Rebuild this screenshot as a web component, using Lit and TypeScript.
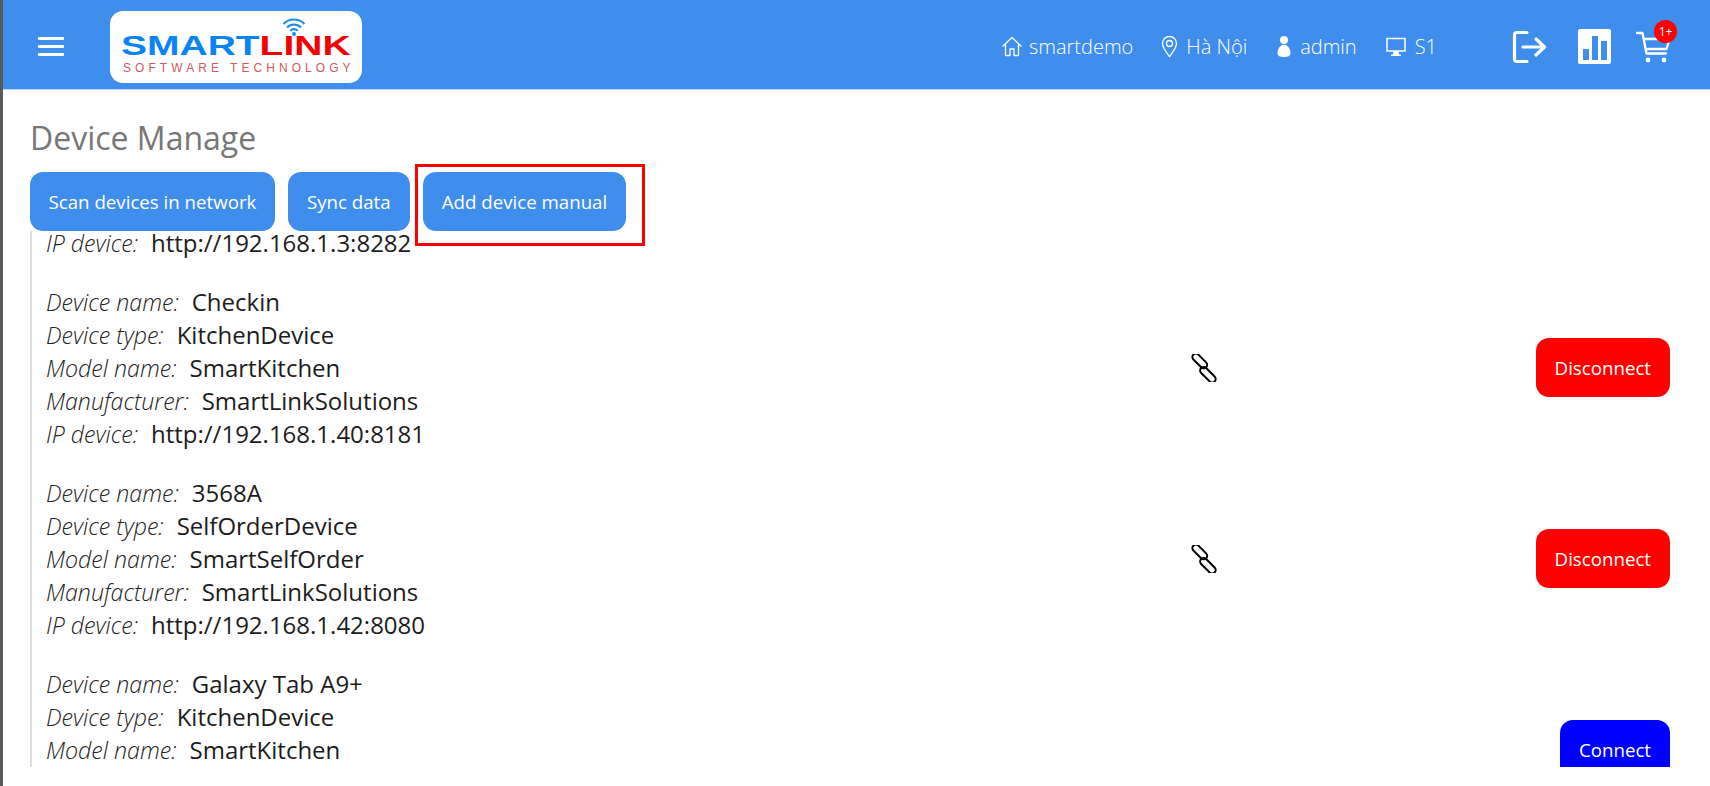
import { LitElement, html, css, svg } from "lit";
import { customElement } from "lit/decorators.js";

const ic = {
  home: svg`<path d="M2 11 L11 2.5 L20 11 M4.5 9.5 V20.5 H9 V14 H13 V20.5 H17.5 V9.5" fill="none" stroke="#fff" stroke-width="1.3" stroke-linejoin="round" stroke-linecap="round"/>`,
  pin: svg`<path d="M8.5 1.5 C4.5 1.5 1.5 4.5 1.5 8.5 C1.5 13 6 18 8.5 21.5 C11 18 15.5 13 15.5 8.5 C15.5 4.5 12.5 1.5 8.5 1.5 Z" fill="none" stroke="#fff" stroke-width="1.3"/><circle cx="8.5" cy="8.5" r="3" fill="none" stroke="#fff" stroke-width="1.3"/>`,
  person: svg`<circle cx="8" cy="5" r="4" fill="#fff"/><path d="M8 9.5 C4.5 9.5 1.5 14 1.5 18 C1.5 21 4 22 8 22 C12 22 14.5 21 14.5 18 C14.5 14 11.5 9.5 8 9.5 Z" fill="#fff"/>`,
  monitor: svg`<path d="M2 2.5 H20 V15 H2 Z" fill="none" stroke="#fff" stroke-width="1.5"/><path d="M8.5 15 H13.5 L14 18.5 H16 V20 H6 V18.5 H8 Z" fill="#fff"/>`,
  logout: svg`<path d="M15 2.5 H5 Q2.5 2.5 2.5 5 V29 Q2.5 31.5 5 31.5 H15" fill="none" stroke="#fff" stroke-width="3.2" stroke-linecap="round"/><path d="M11 17 H32 M24 9 L32.5 17 L24 25" fill="none" stroke="#fff" stroke-width="3.2" stroke-linecap="round" stroke-linejoin="round"/>`,
  chart: svg`<rect width="33" height="35" rx="2" fill="#fff"/><rect x="5" y="20" width="6" height="11" fill="#3f8eed"/><rect x="14" y="7" width="6" height="24" fill="#3f8eed"/><rect x="23" y="12" width="6" height="19" fill="#3f8eed"/>`,
  cart: svg`<path d="M1 2 H6.5 L10.5 22.5 H30" fill="none" stroke="#fff" stroke-width="2.3" stroke-linecap="round" stroke-linejoin="round"/><path d="M7.5 8 H33.5 L30.5 18 H9.5" fill="none" stroke="#fff" stroke-width="2.3" stroke-linejoin="round"/><circle cx="12" cy="29" r="2.4" fill="#fff"/><circle cx="28" cy="29" r="2.4" fill="#fff"/>`,
  wifi: svg`<path d="M1.5 7 C7 1 17 1 22.5 7 M5 10.5 C9 6.5 15 6.5 19 10.5 M8.2 13.8 C10.5 11.8 13.5 11.8 15.8 13.8" fill="none" stroke="#1e88e5" stroke-width="2"/><circle cx="12" cy="17" r="2" fill="#1e88e5"/>`,
  link: svg`<g fill="none" stroke="#000" stroke-width="2" transform="rotate(45 14 14)"><rect x="-3" y="8.5" width="18" height="7" rx="3.5"/><rect x="12" y="12.5" width="19" height="7" rx="3.5"/></g>`,
};

type Dev = { lines: [string, string][]; on: boolean };
const devices: Dev[] = [
  {
    on: true,
    lines: [
      ["Device name:", "Checkin"],
      ["Device type:", "KitchenDevice"],
      ["Model name:", "SmartKitchen"],
      ["Manufacturer:", "SmartLinkSolutions"],
      ["IP device:", "http://192.168.1.40:8181"],
    ],
  },
  {
    on: true,
    lines: [
      ["Device name:", "3568A"],
      ["Device type:", "SelfOrderDevice"],
      ["Model name:", "SmartSelfOrder"],
      ["Manufacturer:", "SmartLinkSolutions"],
      ["IP device:", "http://192.168.1.42:8080"],
    ],
  },
  {
    on: false,
    lines: [
      ["Device name:", "Galaxy Tab A9+"],
      ["Device type:", "KitchenDevice"],
      ["Model name:", "SmartKitchen"],
    ],
  },
];

@customElement("app-root")
export class AppRoot extends LitElement {
  static styles = css`
    :host {
      display: block;
      height: 786px;
      overflow: hidden;
      background: #fff;
      border-left: 3px solid #5a5a5a;
      box-sizing: border-box;
      font-family: "Open Sans", "Noto Sans", sans-serif;
    }
    header {
      height: 89px;
      padding-top: 4px;
      box-sizing: border-box;
      background: #3f8eed;
      display: flex;
      align-items: center;
      color: #fff;
    }
    .rule {
      height: 1px;
      background: #bcd9fa;
    }
    .burger {
      margin-left: 35px;
      width: 26px;
      display: flex;
      flex-direction: column;
      gap: 5px;
    }
    .burger i {
      display: block;
      height: 3px;
      background: #fff;
      border-radius: 1px;
    }
    .logo {
      margin-left: 46px;
      width: 252px;
      height: 72px;
      box-sizing: border-box;
      background: #fff;
      border-radius: 13px;
      padding: 7px 0 0 11px;
      display: flex;
      flex-direction: column;
      position: relative;
    }
    .wifi {
      position: absolute;
      left: 172px;
      top: 6px;
      width: 24px;
      height: 20px;
    }
    .brand {
      margin-top: 15px;
      font: 700 27px/26px "Liberation Sans", sans-serif;
      color: #0b84f3;
      transform: scaleX(1.444);
      transform-origin: left center;
      white-space: nowrap;
    }
    .brand b {
      color: #f40000;
    }
    .tag {
      margin-top: 2px;
      margin-left: 2px;
      font: 400 12px/14px "Liberation Sans", sans-serif;
      letter-spacing: 4.05px;
      color: #cf5a60;
      white-space: nowrap;
    }
    .info {
      margin-left: auto;
      display: flex;
      align-items: center;
      font-size: 20px;
      font-weight: 300;
    }
    .info span {
      display: flex;
      align-items: center;
      gap: 8px;
      margin-left: 28px;
    }
    .info svg {
      display: block;
    }
    .info .tight {
      gap: 6px;
    }
    .info .wide {
      margin-left: 29px;
    }
    .actions {
      display: flex;
      align-items: center;
      margin: 0 38px 0 75px;
    }
    .actions svg {
      display: block;
    }
    .chart {
      margin: 0 25px 0 31px;
    }
    .cart {
      position: relative;
      margin-top: 2px;
    }
    .badge {
      position: absolute;
      right: -5px;
      top: -11px;
      width: 23px;
      height: 23px;
      border-radius: 50%;
      background: #f00;
      font-size: 12px;
      line-height: 23px;
      text-align: center;
      color: #fff;
    }
    h1 {
      margin: 0;
      padding: 26px 0 0 27px;
      font-size: 32px;
      line-height: 44px;
      font-weight: 400;
      color: #777;
    }
    .toolbar {
      display: flex;
      align-items: flex-start;
      padding-left: 27px;
      margin-top: 12px;
      height: 59px;
    }
    button {
      height: 59px;
      border: 0;
      border-radius: 13px;
      padding: 0 18.5px;
      font: 400 18.7px "Open Sans", sans-serif;
      color: #fff;
      background: #3f8eed;
    }
    .sync {
      margin-left: 13px;
      padding: 0 19px;
    }
    .hl {
      margin: -8px 0 0 5px;
      border: 3px solid #f00;
      box-sizing: border-box;
      height: 82px;
      padding: 5px 16px 0 5px;
      position: relative;
      z-index: 1;
      display: flex;
      align-items: flex-start;
    }
    .hl button {
      padding: 0 19px;
    }
    .list {
      margin: 0 0 0 27px;
      width: 1653px;
      height: 536px;
      box-sizing: border-box;
      border-left: 2px solid #ddd;
      overflow-y: scroll;
      padding-left: 14px;
    }
    .list::-webkit-scrollbar {
      width: 5px;
    }
    .list::-webkit-scrollbar-track {
      background: linear-gradient(to right, transparent 3px, #ddd 3px);
    }
    .list::-webkit-scrollbar-thumb {
      background: #aaa;
    }
    .inner {
      padding: 173px 13px 41px 0;
    }
    .line {
      display: flex;
      align-items: baseline;
      gap: 13px;
      height: 33px;
      line-height: 33px;
    }
    .line em {
      font-size: 23.2px;
      font-weight: 300;
      color: #222;
    }
    .line b {
      font-size: 24px;
      font-weight: 400;
      color: #1c1c1c;
    }
    .row {
      margin-top: 26px;
      min-height: 165px;
      display: grid;
      grid-template-columns: 1144px 27px 1fr;
      align-items: center;
    }
    .row .text {
      align-self: start;
    }
    .row svg {
      display: block;
    }
    .row button {
      justify-self: end;
      padding: 0 19px;
    }
    .red {
      background: #f00;
    }
    .blue {
      background: #00f;
    }
  `;

  firstUpdated() {
    const l = this.renderRoot.querySelector(".list") as HTMLElement;
    l.scrollTop = 178;
  }

  private line(a: string, b: string) {
    return html`<div class="line"><em>${a}</em><b>${b}</b></div>`;
  }

  render() {
    return html`
      <header>
        <div class="burger"><i></i><i></i><i></i></div>
        <div class="logo">
          <svg class="wifi" viewBox="0 0 24 20">${ic.wifi}</svg>
          <div class="brand">SMART<b>LINK</b></div>
          <div class="tag">SOFTWARE TECHNOLOGY</div>
        </div>
        <div class="info">
          <span class="tight"><svg width="22" height="23" viewBox="0 0 22 23">${ic.home}</svg>smartdemo</span>
          <span><svg width="17" height="23" viewBox="0 0 17 23">${ic.pin}</svg>Hà Nội</span>
          <span class="wide"><svg width="16" height="23" viewBox="0 0 16 23">${ic.person}</svg>admin</span>
          <span><svg width="22" height="21" viewBox="0 0 22 21">${ic.monitor}</svg>S1</span>
        </div>
        <div class="actions">
          <svg width="35" height="34" viewBox="0 0 35 34">${ic.logout}</svg>
          <svg class="chart" width="33" height="35" viewBox="0 0 33 35">${ic.chart}</svg>
          <div class="cart">
            <svg width="36" height="33" viewBox="0 0 36 33">${ic.cart}</svg>
            <div class="badge">1+</div>
          </div>
        </div>
      </header>
      <div class="rule"></div>
      <h1>Device Manage</h1>
      <div class="toolbar">
        <button>Scan devices in network</button>
        <button class="sync">Sync data</button>
        <div class="hl"><button>Add device manual</button></div>
      </div>
      <div class="list">
        <div class="inner">
          ${this.line("IP device:", "http://192.168.1.3:8282")}
          ${devices.map(
            (d) => html`<div class="row">
              <div class="text">${d.lines.map(([a, b]) => this.line(a, b))}</div>
              <div>${d.on ? html`<svg width="28" height="28" viewBox="0 0 28 28">${ic.link}</svg>` : ""}</div>
              <button class=${d.on ? "red" : "blue"}>${d.on ? "Disconnect" : "Connect"}</button>
            </div>`
          )}
        </div>
      </div>
    `;
  }
}
